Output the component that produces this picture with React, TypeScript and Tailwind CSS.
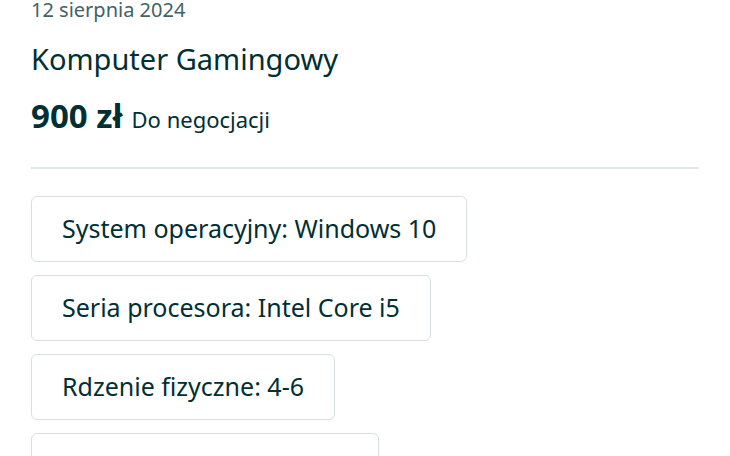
import React from "react";

const params = [
  "System operacyjny: Windows 10",
  "Seria procesora: Intel Core i5",
  "Rdzenie fizyczne: 4-6",
  "Karta graficzna: GTX 960",
];

export default function App() {
  return (
    <div
      className="w-[730px] h-[456px] overflow-hidden bg-white text-[#002f34] px-[31px]"
      style={{ fontFamily: '"Noto Sans", Lato, sans-serif' }}
    >
      <div className="-mt-[3px] text-[20px] leading-[26px] text-[#406367]">12 sierpnia 2024</div>
      <h1 className="mt-[19px] text-[29px] leading-[34px]">Komputer Gamingowy</h1>
      <div className="mt-[22px] flex items-baseline gap-[9px]">
        <span className="text-[33px] leading-[36px] font-bold">900 zł</span>
        <span className="text-[22px]">Do negocjacji</span>
      </div>
      <div className="mt-[31px] w-[668px] border-t-2 border-[#e3e8e8]" />
      <div className="mt-[27px] flex flex-col items-start gap-[13px]">
        {params.map((p) => (
          <div
            key={p}
            className="h-[66px] flex items-center px-[30px] border border-[#d8dfe0] rounded-[6px] text-[25px]"
          >
            {p}
          </div>
        ))}
      </div>
    </div>
  );
}
